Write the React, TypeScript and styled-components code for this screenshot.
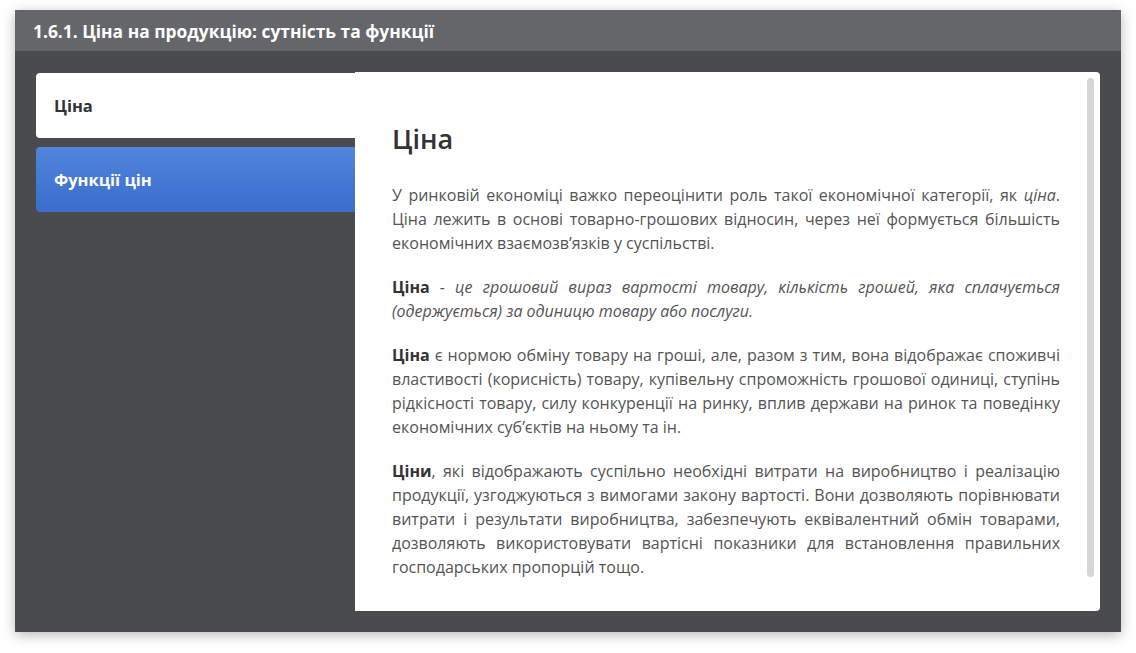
import React from "react";
import styled, { createGlobalStyle } from "styled-components";

const Global = createGlobalStyle`
  html, body { margin: 0; padding: 0; background: #ffffff; }
  body { font-family: "Open Sans", "Noto Sans", sans-serif; }
  * { box-sizing: border-box; }
`;

const Page = styled.div`
  padding: 10px 15px 21px 15px;
  width: 1136px;
  height: 653px;
`;

const Window = styled.div`
  width: 1106px;
  height: 622px;
  display: flex;
  flex-direction: column;
  box-shadow: 0 3px 12px rgba(0, 0, 0, 0.28);
`;

const Header = styled.div`
  height: 41px;
  flex: none;
  background: #646669;
  display: flex;
  align-items: center;
  padding-left: 18px;
  color: #ffffff;
  font-weight: 700;
  font-size: 17.4px;
`;

const Body = styled.div`
  flex: 1;
  background: #4a4b4d;
  padding: 21px;
  display: grid;
  grid-template-columns: 319px 1fr;
  min-height: 0;
`;

const Tabs = styled.div`
  display: flex;
  flex-direction: column;
  gap: 9px;
  padding-top: 1px;
`;

const Tab = styled.div<{ $active?: boolean }>`
  height: 65px;
  display: flex;
  align-items: center;
  padding-left: 18px;
  font-weight: 700;
  font-size: 16.5px;
  border-radius: 4px 0 0 4px;
  color: ${(p) => (p.$active ? "#333333" : "#ffffff")};
  background: ${(p) =>
    p.$active ? "#ffffff" : "linear-gradient(180deg, #5184da 0%, #3a6dcd 100%)"};
`;

const Panel = styled.div`
  background: #ffffff;
  border-radius: 0 4px 4px 0;
  display: flex;
  min-height: 0;
  overflow: hidden;
`;

const Content = styled.div`
  flex: 1;
  padding: 50px 27px 0 37px;
  color: #555555;
  font-size: 16px;
  line-height: 24px;
  overflow: hidden;
`;

const Heading = styled.h2`
  margin: 0 0 27px 0;
  font-size: 27px;
  line-height: 34px;
  font-weight: 600;
  color: #333333;
`;

const Para = styled.p`
  margin: 0 0 20px 0;
  text-align: justify;
`;

const Strong = styled.b`
  font-weight: 700;
  color: #333333;
`;

const Scrollbar = styled.div`
  flex: none;
  width: 7px;
  margin: 6px 6px 34px 0;
  border-radius: 4px;
  background: #d6d6d6;
`;

export default function App() {
  return (
    <>
      <Global />
      <Page>
        <Window>
          <Header>1.6.1. Ціна на продукцію: сутність та функції</Header>
          <Body>
            <Tabs>
              <Tab $active>Ціна</Tab>
              <Tab>Функції цін</Tab>
            </Tabs>
            <Panel>
              <Content>
                <Heading>Ціна</Heading>
                <Para>
                  У ринковій економіці важко переоцінити роль такої економічної категорії, як{" "}
                  <i>ціна</i>. Ціна лежить в основі товарно-грошових відносин, через неї формується
                  більшість економічних взаємозв’язків у суспільстві.
                </Para>
                <Para>
                  <Strong>Ціна</Strong>{" "}
                  <i>
                    - це грошовий вираз вартості товару, кількість грошей, яка сплачується
                    (одержується) за одиницю товару або послуги.
                  </i>
                </Para>
                <Para>
                  <Strong>Ціна</Strong> є нормою обміну товару на гроші, але, разом з тим, вона
                  відображає споживчі властивості (корисність) товару, купівельну спроможність
                  грошової одиниці, ступінь рідкісності товару, силу конкуренції на ринку, вплив
                  держави на ринок та поведінку економічних суб’єктів на ньому та ін.
                </Para>
                <Para>
                  <Strong>Ціни</Strong>, які відображають суспільно необхідні витрати на
                  виробництво і реалізацію продукції, узгоджуються з вимогами закону вартості.
                  Вони дозволяють порівнювати витрати і результати виробництва, забезпечують
                  еквівалентний обмін товарами, дозволяють використовувати вартісні показники для
                  встановлення правильних господарських пропорцій тощо.
                </Para>
              </Content>
              <Scrollbar />
            </Panel>
          </Body>
        </Window>
      </Page>
    </>
  );
}
